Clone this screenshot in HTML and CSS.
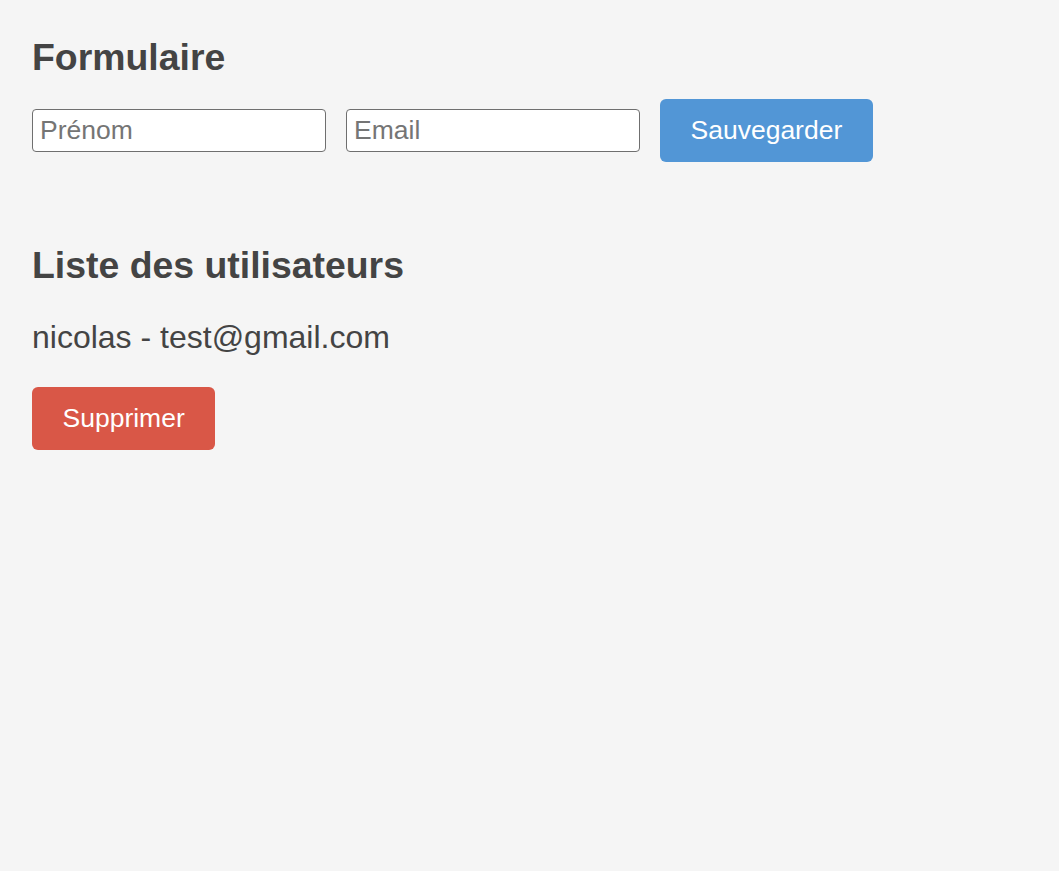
FILE: index.html
```html
<!DOCTYPE html>
<html lang="fr">
<head>
<meta charset="utf-8">
<title>Formulaire</title>
<link rel="stylesheet" href="styles.css">
</head>
<body>
  <h1 class="title">Formulaire</h1>
  <form class="form-row">
    <input class="field" type="text" placeholder="Prénom">
    <input class="field" type="email" placeholder="Email">
    <button class="btn btn-save" type="button">Sauvegarder</button>
  </form>
  <h2 class="title title-list">Liste des utilisateurs</h2>
  <p class="user">nicolas - test@gmail.com</p>
  <button class="btn btn-delete" type="button">Supprimer</button>
</body>
</html>
```
FILE: styles.css
```css
html, body {
  margin: 0;
  background: #f5f5f5;
}
body {
  padding: 36px 32px;
  font-family: "Liberation Sans", Arial, Helvetica, sans-serif;
  color: #444444;
}
.title {
  margin: 0 0 21px;
  font-size: 37.4px;
  line-height: 42px;
  font-weight: 700;
  color: #444444;
}
.title-list {
  margin-top: 82px;
  margin-bottom: 33px;
}
.form-row {
  display: flex;
  align-items: center;
  gap: 20px;
  margin: 0;
}
.field {
  box-sizing: border-box;
  width: 294px;
  height: 43px;
  margin: 0;
  padding: 0 7px;
  border: 1px solid #6f6f6f;
  border-radius: 4px;
  background: #ffffff;
  font-family: "Liberation Sans", Arial, Helvetica, sans-serif;
  font-size: 26.5px;
  color: #333333;
  outline: none;
}
.field::placeholder {
  color: #757575;
  opacity: 1;
}
.btn {
  margin: 0;
  border: none;
  border-radius: 6px;
  padding: 16px 30.5px;
  font-family: "Liberation Sans", Arial, Helvetica, sans-serif;
  font-size: 26.5px;
  line-height: 31px;
  color: #ffffff;
  cursor: pointer;
}
.btn-save {
  background: #5296d6;
}
.btn-delete {
  background: #d95747;
}
.user {
  margin: 0 0 32px;
  font-size: 32px;
  line-height: 36px;
}
```
